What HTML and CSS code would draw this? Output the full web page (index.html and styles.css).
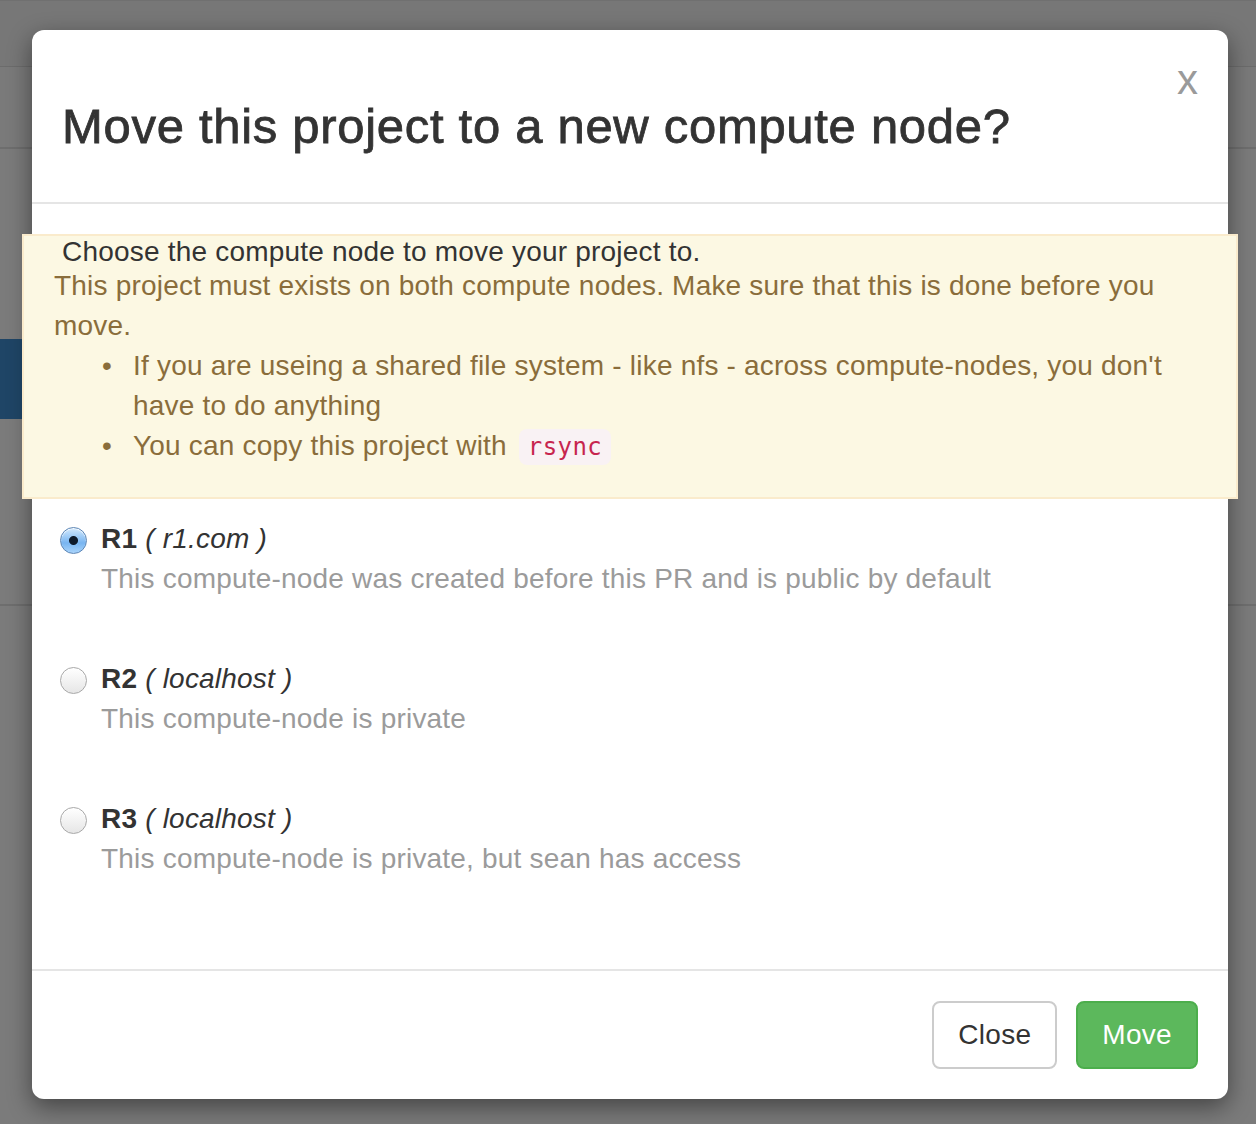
FILE: index.html
```html
<!DOCTYPE html>
<html lang="en">
<head>
    <meta charset="UTF-8">
    <meta name="viewport" content="width=device-width, initial-scale=1.0">
    <title>Move project</title>
    <link rel="stylesheet" href="styles.css">
</head>
<body>
    <!-- pagina sotto il backdrop -->
    <div class="page">
        <div class="page-nav"></div>
        <div class="page-sub"></div>
        <div class="page-row">
            <div class="page-tab"></div>
        </div>
        <div class="page-rest"></div>
    </div>

    <div class="modal">
        <div class="modal-header">
            <button class="close" type="button">x</button>
            <h3 class="modal-title">Move this project to a new compute node?</h3>
        </div>
        <div class="modal-body">
            <div class="alert">
                <p class="alert-lead">Choose the compute node to move your project to.</p>
                This project must exists on both compute nodes. Make sure that this is done before you move.
                <ul>
                    <li>If you are useing a shared file system - like nfs - across compute-nodes, you don't have to do anything</li>
                    <li>You can copy this project with <code>rsync</code></li>
                </ul>
            </div>

            <label class="radio">
                <input type="radio" name="node" checked>
                <span class="radio-text">
                    <strong>R1</strong> <em>( r1.com )</em>
                    <span class="help">This compute-node was created before this PR and is public by default</span>
                </span>
            </label>
            <label class="radio">
                <input type="radio" name="node">
                <span class="radio-text">
                    <strong>R2</strong> <em>( localhost )</em>
                    <span class="help">This compute-node is private</span>
                </span>
            </label>
            <label class="radio">
                <input type="radio" name="node">
                <span class="radio-text">
                    <strong>R3</strong> <em>( localhost )</em>
                    <span class="help">This compute-node is private, but sean has access</span>
                </span>
            </label>
        </div>
        <div class="modal-footer">
            <button class="btn" type="button">Close</button>
            <button class="btn btn-success" type="button">Move</button>
        </div>
    </div>
</body>
</html>
```

FILE: styles.css
```css
html, body {
    margin: 0;
    height: 100%;
}
body {
    font-family: 'Liberation Sans', Arial, sans-serif;
    font-size: 28px;
    line-height: 40px;
    letter-spacing: 0.2px;
    color: #333;
    background-color: #7b7b7b;
    overflow: hidden;
}

/* pagina oscurata dietro il modal */
.page-nav {
    height: 66px;
    background-color: #777;
    border-bottom: 1px solid #6c6c6c;
    box-shadow: inset 0 26px 0 -25px #707070;
}
.page-sub {
    height: 80px;
    background-color: #7a7a7a;
    border-bottom: 2px solid #6e6e6e;
}
.page-row {
    height: 457px;
    padding-top: 190px;
    box-sizing: border-box;
    border-bottom: 2px solid #6e6e6e;
}
.page-tab {
    width: 22px;
    height: 80px;
    background-color: #1f4566;
}
.page-rest {
    height: 520px;
}

.modal {
    position: absolute;
    top: 30px;
    left: 32px;
    width: 1196px;
    background-color: #fff;
    border-radius: 12px;
    box-shadow: 0 8px 24px rgba(0, 0, 0, 0.45);
}
.modal-header {
    padding: 30px;
    border-bottom: 2px solid #e5e5e5;
}
.close {
    float: right;
    margin-top: 0;
    padding: 0;
    border: none;
    background: none;
    font-family: 'Liberation Sans', Arial, sans-serif;
    font-size: 42px;
    line-height: 40px;
    color: #9a9a9a;
    cursor: pointer;
}
.modal-title {
    margin: 40px 0 20px;
    font-size: 49px;
    line-height: 52px;
    letter-spacing: 0.7px;
    font-weight: normal;
    color: #333;
    -webkit-text-stroke: 0.8px #333;
}
.modal-body {
    padding: 30px;
}
.alert {
    margin: 0 -40px;
    padding: 2px 30px 30px 30px;
    background-color: #fcf8e3;
    border: 2px solid #faebcc;
    color: #8a6d3b;
}
.alert-lead {
    margin: 0 0 0 8px;
    line-height: 28px;
    color: #333;
}
.alert ul {
    margin: 0;
    padding-left: 48px;
    list-style: none;
}
.alert li {
    position: relative;
    padding-left: 31px;
}
.alert li::before {
    content: "\2022";
    position: absolute;
    left: 0;
    top: 0;
}
code {
    font-family: 'DejaVu Sans Mono', 'Liberation Mono', monospace;
    font-size: 24px;
    letter-spacing: 0.4px;
    margin-left: 4px;
    padding: 4px 9px;
    color: #c7254e;
    background-color: #f9f2f4;
    border-radius: 8px;
}

.radio {
    display: flex;
    align-items: flex-start;
    margin: 20px 0 60px;
    cursor: pointer;
}
.radio + .radio {
    margin-top: 0;
}
.radio input {
    appearance: none;
    -webkit-appearance: none;
    flex: none;
    width: 27px;
    height: 27px;
    margin: 8px 14px 0 -2px;
    border: 1px solid #a8a8a8;
    border-radius: 50%;
    background: linear-gradient(#ffffff, #e6e6e6);
    box-shadow: inset 0 1px 1px rgba(255, 255, 255, 0.9);
    box-sizing: border-box;
}
.radio input:checked {
    border-color: #5d86b5;
    background: radial-gradient(circle, #0d1a2a 0 4px, transparent 5px),
                linear-gradient(#d3e9fd, #78b5f1 60%, #a9d4fb);
}
.radio-text em {
    font-style: italic;
}
.help {
    display: block;
    color: #9b9b9b;
}

.modal-footer {
    padding: 30px;
    border-top: 2px solid #e5e5e5;
    text-align: right;
}
.btn {
    display: inline-block;
    height: 68px;
    padding: 0 24px;
    font-family: 'Liberation Sans', Arial, sans-serif;
    font-size: 28px;
    letter-spacing: 0.3px;
    line-height: 64px;
    color: #333;
    background-color: #fff;
    border: 2px solid #ccc;
    border-radius: 8px;
    cursor: pointer;
    vertical-align: middle;
}
.btn + .btn {
    margin-left: 11px;
}
.btn-success {
    color: #fff;
    background-color: #5cb85c;
    border-color: #4cae4c;
}
```
